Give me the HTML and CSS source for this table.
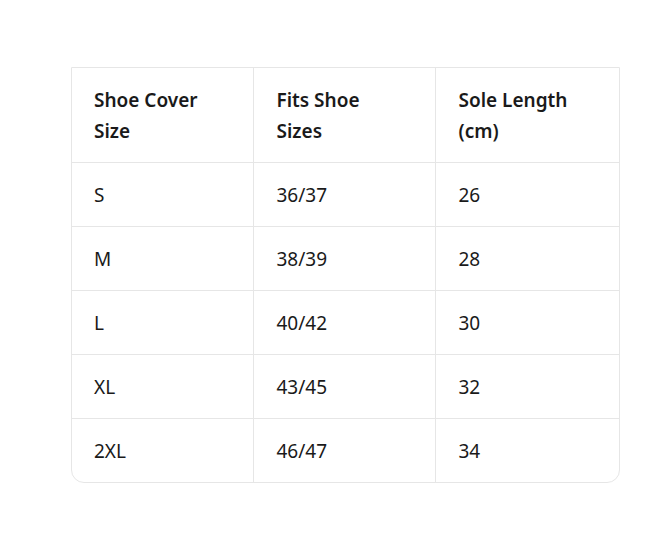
FILE: index.html
```html
<!DOCTYPE html>
<html>
<head>
<meta charset="utf-8">
<link rel="stylesheet" href="styles.css">
</head>
<body>
<div class="wrap">
  <table class="sizes">
    <colgroup><col class="c1"><col class="c2"><col class="c3"></colgroup>
    <thead>
      <tr><th>Shoe Cover<br>Size</th><th>Fits Shoe<br>Sizes</th><th>Sole Length<br>(cm)</th></tr>
    </thead>
    <tbody>
      <tr><td>S</td><td>36/37</td><td>26</td></tr>
      <tr><td>M</td><td>38/39</td><td>28</td></tr>
      <tr><td>L</td><td>40/42</td><td>30</td></tr>
      <tr><td>XL</td><td>43/45</td><td>32</td></tr>
      <tr><td>2XL</td><td>46/47</td><td>34</td></tr>
    </tbody>
  </table>
</div>
</body>
</html>
```
FILE: styles.css
```css
html, body { margin: 0; background: #fff; }
body {
  padding: 67px 0 0 71px;
  font-family: "Noto Sans", "Open Sans", sans-serif;
  color: #1a1a1a;
}
.wrap {
  width: 547px;
  border: 1px solid #e6e6e6;
  border-radius: 0 0 13px 13px;
  overflow: hidden;
}
.sizes {
  width: 100%;
  border-collapse: collapse;
  table-layout: fixed;
  font-size: 19px;
  line-height: 31px;
}
.c1 { width: 181px; }
.c2 { width: 182px; }
.c3 { width: 184px; }
.sizes th, .sizes td {
  text-align: left;
  padding: 17px 22px 15px 23px;
  border-left: 1px solid #e6e6e6;
  border-bottom: 1px solid #e6e6e6;
  vertical-align: middle;
}
.sizes th:first-child, .sizes td:first-child { padding-left: 22px; }
.sizes th { font-weight: 600; }
.sizes td { font-weight: 400; }
.sizes tr > :first-child { border-left: none; }
.sizes tbody tr:last-child td { border-bottom: none; }
```
